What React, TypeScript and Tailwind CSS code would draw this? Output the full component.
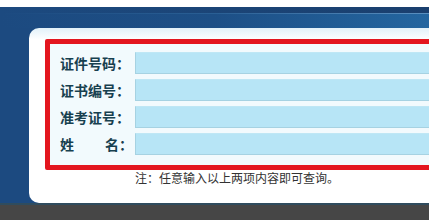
import React from "react";

const rows = [
  { label: "证件号码：" },
  { label: "证书编号：" },
  { label: "准考证号：" },
];

export default function App() {
  return (
    <div
      className="w-[429px] h-[220px] overflow-hidden bg-white flex flex-col"
      style={{ fontFamily: '"Noto Sans CJK SC", "Noto Sans", sans-serif' }}
    >
      <div className="h-[7px] bg-white shrink-0" />
      <div className="h-[21px] shrink-0 flex flex-col bg-gradient-to-r from-[#1c4a80] via-[#1d4f86] to-[#2466a0]">
        <div className="h-[6px] bg-gradient-to-r from-[#1c4a80] to-[#1a3f6e]" />
        <div className="h-px bg-gradient-to-r from-[#1c4a80] via-[#2a5f94] to-[#5a90c0]" />
        <div className="flex-1" />
      </div>
      <div className="h-[175px] shrink-0 flex bg-[#1c4a80]">
        <div className="w-[29px] shrink-0" />
        <div className="w-[460px] shrink-0 rounded-l-[10px] bg-gradient-to-b from-[#e2f1f9] via-white via-[12px] to-white pl-[16px] pt-[11px]">
          <div className="w-[440px] border-[5px] border-[#e3161f] bg-[#f2fafd] pl-[10px] pt-[8px] pb-[10px] flex flex-col gap-[5px] rounded-[2px]">
            {rows.map((r) => (
              <div key={r.label} className="flex items-center h-[22px]">
                <div className="w-[75px] shrink-0 text-[14px] font-bold text-[#17404f] leading-none">
                  {r.label}
                </div>
                <div className="flex-1 h-[22px] bg-[#b7e5f6] border border-[#a6d2e2] border-t-[#bfe7f5]" />
              </div>
            ))}
            <div className="flex items-center h-[22px]">
              <div className="w-[75px] shrink-0 text-[14px] font-bold text-[#17404f] leading-none flex">
                <span>姓</span>
                <span className="ml-[31px]">名：</span>
              </div>
              <div className="flex-1 h-[22px] bg-[#b7e5f6] border border-[#a6d2e2] border-t-[#bfe7f5]" />
            </div>
          </div>
          <div className="pl-[90px] pt-[1px] text-[12px] leading-[14px] text-[#333333]">
            注：任意输入以上两项内容即可查询。
          </div>
        </div>
      </div>
      <div className="h-[2px] shrink-0 bg-[#2f4c5e]" />
      <div className="flex-1 bg-[#464646]" />
    </div>
  );
}
